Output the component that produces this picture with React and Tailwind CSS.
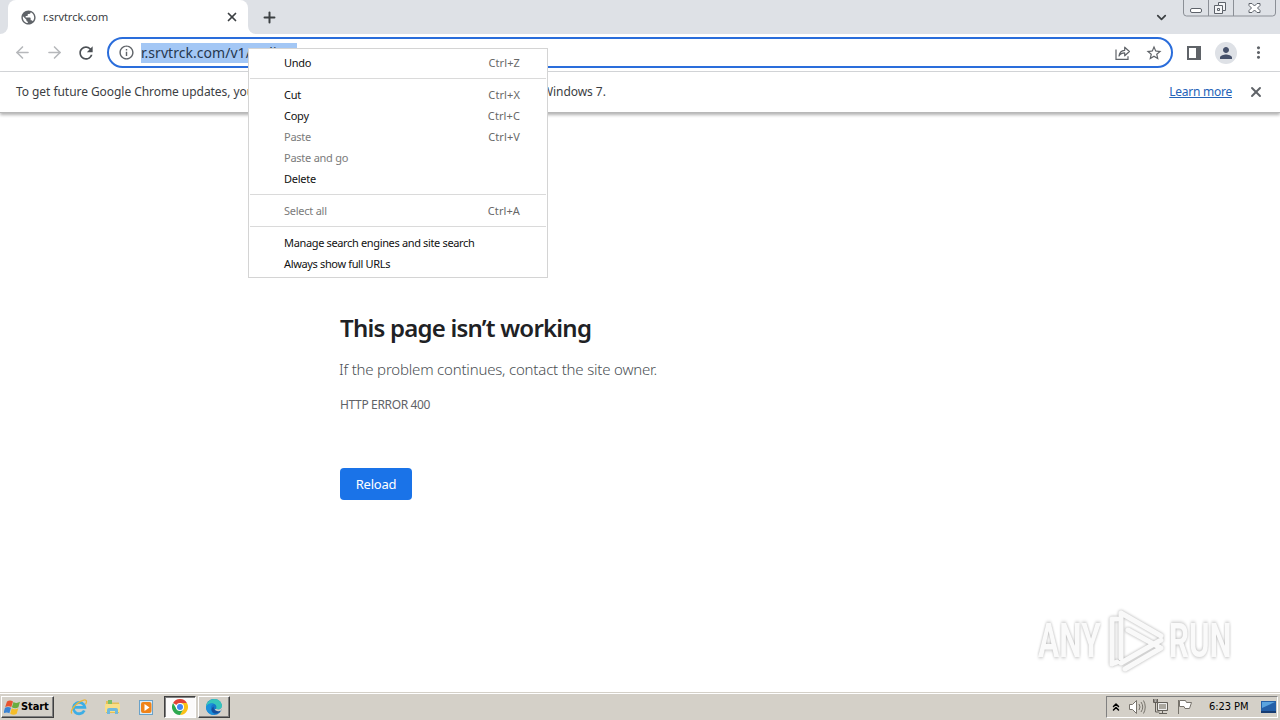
import { X, Plus, ChevronDown, ArrowLeft, ArrowRight, ChevronsUp } from 'lucide-react';
import { MdRefresh, MdInfoOutline, MdStarBorder, MdMoreVert, MdPerson, MdPublic } from 'react-icons/md';

const MENU = [
  [{ label: 'Undo', keys: 'Ctrl+Z' }],
  [
    { label: 'Cut', keys: 'Ctrl+X' },
    { label: 'Copy', keys: 'Ctrl+C' },
    { label: 'Paste', keys: 'Ctrl+V', disabled: true },
    { label: 'Paste and go', disabled: true },
    { label: 'Delete' },
  ],
  [{ label: 'Select all', keys: 'Ctrl+A', disabled: true }],
  [{ label: 'Manage search engines and site search', wide: true }, { label: 'Always show full URLs', wide: true }],
];

function WindowButtons() {
  return (
    <svg className="ml-[14px] mr-[3px] h-[17px] w-[94px] shrink-0 self-start" viewBox="0 0 94 17" fill="none">
      <path d="M.5 0v13q0 3 3 3h86q3 0 3-3V0M25.5 0v16M50.5 0v16" stroke="#8b8f96" />
      <rect x="7.5" y="8.5" width="11" height="4" rx="1.5" fill="#fff" stroke="#5d626a" />
      <path d="M35.5 2.500h7v8h-3v3h-8v-8h4z" fill="#f4f5f7" stroke="#5d626a" />
      <path d="M35.5 5.500h4v5M34.5 8.500h2v2h-2z" stroke="#5d626a" />
      <path d="M66 3.500h3l2.500 2.500L74 3.500h3v2L74.500 8l2.500 2.500v2h-3L71.500 10 69 12.500h-3v-2L68.500 8 66 5.500z" fill="#fff" stroke="#5d626a" />
    </svg>
  );
}

function TabStrip() {
  return (
    <div className="flex h-[34px] shrink-0 items-center bg-[#dee1e6]">
      <div className="h-full w-2 bg-white">
        <div className="h-full w-full rounded-br-lg bg-[#dee1e6]" />
      </div>
      <div className="flex h-full w-[240px] items-center rounded-t-lg bg-white pr-2 pl-[12px]">
        <MdPublic size={17} className="text-[#5f6368]" />
        <span className="ml-[6px] flex-1 text-[11px] tracking-[-0.04px] text-[#3c4043]">r.srvtrck.com</span>
        <X size={14} strokeWidth={3} className="mr-[1px] text-[#3c4043]" />
      </div>
      <div className="h-full w-2 bg-white">
        <div className="h-full w-full rounded-bl-lg bg-[#dee1e6]" />
      </div>
      <Plus size={17} strokeWidth={2.8} className="ml-[5px] text-[#3c4043]" />
      <div className="flex-1" />
      <ChevronDown size={15} strokeWidth={2.8} className="text-[#3c4043]" />
      <WindowButtons />
    </div>
  );
}

function Toolbar() {
  return (
    <div className="flex h-[38px] shrink-0 items-center border-b border-[#d5d7da] bg-white pl-[13px]">
      <ArrowLeft size={19} strokeWidth={2} className="text-[#b6b8bb]" />
      <ArrowRight size={19} strokeWidth={2} className="ml-[13px] text-[#b6b8bb]" />
      <MdRefresh size={20} className="ml-[12px] text-[#4c5055]" />
      <div className="ml-[11px] flex h-[31px] w-[1066px] items-center rounded-full border-2 border-[#2a6ddb] pr-[8px] pl-[9px]">
        <MdInfoOutline size={17} className="text-[#5f6368]" />
        <span className="ml-[6px] h-[20px] w-[156px] overflow-hidden bg-[#a3c7f5] text-[14px] leading-[20px] tracking-[0.04px] whitespace-nowrap text-[#26374f]">
          r.srvtrck.com/v1/redirect
        </span>
        <div className="flex-1" />
        <svg className="h-[16px] w-[16px]" viewBox="0 0 16 16" fill="none" stroke="#5f6368" strokeWidth="1.2">
          <path d="M1 4.500v9.800h12v-3" />
          <path d="M4 11c.4-3.800 2.200-5.500 5.700-5.700V2.200l4.700 4.300-4.700 4.300V7.900C7 7.900 5.300 8.700 4 11z" strokeLinejoin="round" />
        </svg>
        <MdStarBorder size={18} className="ml-[14px] text-[#5f6368]" />
      </div>
      <svg className="ml-[14px] h-[14px] w-[14px]" viewBox="0 0 14 14">
        <path d="M0 0h14v14H0zM2 2v10h7V2z" fill="#5f6368" fillRule="evenodd" />
      </svg>
      <div className="ml-[14px] flex h-[22px] w-[22px] items-center justify-center rounded-full bg-[#dee1e6]">
        <MdPerson size={18} className="text-[#46516b]" />
      </div>
      <MdMoreVert size={19} className="ml-[12px] text-[#5f6368]" />
    </div>
  );
}

function InfoBar() {
  return (
    <div className="relative flex h-[41px] shrink-0 items-center border-b border-[#b8b8b8] bg-white pr-[16px] pl-4 text-[12px] shadow-[0_2px_3px_rgba(0,0,0,0.3)]">
      <span className="flex-1 tracking-[-0.055px] whitespace-nowrap text-[#3c4043]">
        To get future Google Chrome updates, you'll need Windows 10 or later. This computer is using Windows 7.
      </span>
      <a className="tracking-[-0.25px] text-[#2463b8] underline">Learn more</a>
      <X size={16} strokeWidth={2.8} className="ml-[16px] text-[#5f6368]" />
    </div>
  );
}

function ContextMenu() {
  return (
    <div className="absolute top-[48px] left-[248px] flex h-[230px] w-[300px] flex-col border border-[#d4d4d4] bg-white px-[1px] pt-[4px] text-[11px]">
      {MENU.map((group, i) => (
        <div key={i} className={i > 0 ? 'mt-[4px] border-t border-[#dadada] pt-[6px]' : ''}>
          {group.map(({ label, keys, disabled, wide }) => (
            <div
              key={label}
              className={`flex h-[21px] items-center justify-between pr-[26px] pl-[34px] whitespace-nowrap ${
                disabled ? 'text-[#7b7b7b]' : 'text-[#111]'
              } ${wide ? 'tracking-[-0.35px]' : 'tracking-[-0.25px]'}`}
            >
              <span>{label}</span>
              <span className="tracking-[0.1px] text-[#686868]">{keys}</span>
            </div>
          ))}
        </div>
      ))}
    </div>
  );
}

function ErrorPage() {
  return (
    <main className="flex flex-1 flex-col items-start bg-white pt-[198px] pl-[340px]">
      <h1 className="text-[24px] leading-[34px] font-semibold tracking-[-0.78px] text-[#202124]">This page isn’t working</h1>
      <p className="-ml-px mt-[14px] text-[15px] leading-[20px] font-light tracking-[-0.19px] text-[#4b4f54]">
        If the problem continues, contact the site owner.
      </p>
      <p className="mt-[18px] text-[12px] leading-[16px] tracking-[-0.35px] text-[#5f6368]">HTTP ERROR 400</p>
      <button className="mt-[55px] h-[32px] w-[72px] rounded-[4px] bg-[#1a73e8] pt-[1px] text-[13px] tracking-[-0.25px] text-white">Reload</button>
    </main>
  );
}

function Watermark() {
  return (
    <div className="absolute top-[609px] left-[1038px] flex items-center font-['Roboto','Liberation_Sans',sans-serif] text-[48px] leading-[64px] font-bold text-[#fafafa]">
      <span className="w-[68px]">
        <span className="inline-block origin-left scale-x-[0.66] drop-shadow-[0_0_2px_#aaa]">ANY</span>
      </span>
      <svg className="h-[64px] w-[60px] drop-shadow-[0_0_1.5px_#aaa]" viewBox="0 0 60 64" fill="none" stroke="#f9f9f9" strokeWidth="5" strokeLinejoin="round" strokeLinecap="round">
        <path d="M11 10H6v45l5-2M15 4v45M15 4l40 23M22 21l31 17M55 31L15 54M19 60l36-21" />
      </svg>
      <span className="ml-[3px] inline-block w-[65px]">
        <span className="inline-block origin-left scale-x-[0.65] drop-shadow-[0_0_2px_#aaa]">RUN</span>
      </span>
    </div>
  );
}

function WindowsFlag() {
  return (
    <svg className="h-[17px] w-[17px]" viewBox="0 0 17 17">
      <path d="M3 2.500q3-2 6 0L7.300 8Q4.500 6.500 1.200 8z" fill="#e8532f" />
      <path d="M9.500 3q3 2 6.500-.2l-1.600 5.500q-3 2-6.500 0z" fill="#69ad3f" />
      <path d="M1 8.700q3-1.600 6 0l-1.600 5.500q-2.500-1.500-6 0z" fill="#3b83d3" />
      <path d="M7.800 9.200q3 2 6.500 0l-1.600 5.500q-3 2-6.500 0z" fill="#f6bd28" />
    </svg>
  );
}

function IeIcon() {
  return (
    <svg className="h-[18px] w-[18px]" viewBox="0 0 18 18" fill="none">
      <path d="M14.300 12.500A5.700 5.700 0 1 1 14.800 9.300H5" stroke="#3daee5" strokeWidth="2.800" />
      <path d="M2 15.500c-3-2 4-11 11-13.200 4.500-1.400 3.800 2 2.500 4" stroke="#e9b63d" strokeWidth="1.300" />
    </svg>
  );
}

function FolderIcon() {
  return (
    <svg className="h-[18px] w-[18px]" viewBox="0 0 18 18">
      <path d="M2 3h5l1 1.500h7V15H2z" fill="#e5bf55" />
      <path d="M4 2h4v4H4z" fill="#7abf67" />
      <path d="M1 6h15v8H1z" fill="#f8df88" />
      <path d="M3 16v-4q0-2 2-2h7q2 0 2 2v4h-3v-3H6v3z" fill="#70b9dc" />
    </svg>
  );
}

function MediaIcon() {
  return (
    <svg className="h-[17px] w-[17px]" viewBox="0 0 17 17">
      <rect x="1.5" y="1.5" width="13" height="14" fill="#d8ebf8" stroke="#6aa2c9" />
      <rect x="3" y="3" width="10.500" height="11" rx="2" fill="#ef8319" />
      <path d="M6.500 5v7l5-3.500z" fill="#fff" />
    </svg>
  );
}

function ChromeIcon() {
  return (
    <svg className="h-[16px] w-[16px]" viewBox="0 0 16 16">
      <path d="M8 8L1.070 4A8 8 0 0 1 14.930 4H8z" fill="#e24336" />
      <path d="M8 4h6.930A8 8 0 0 1 8 16l3.460-6z" fill="#fbc116" />
      <path d="M1.070 4A8 8 0 0 0 8 16l3.460-6L8 8 4.540 10z" fill="#2da94f" />
      <circle cx="8" cy="8" r="4" fill="#fff" />
      <circle cx="8" cy="8" r="3" fill="#4285f4" />
    </svg>
  );
}

function EdgeIcon() {
  return (
    <svg className="h-[16px] w-[16px]" viewBox="0 0 16 16">
      <circle cx="8" cy="8" r="8" fill="#1678ca" />
      <path d="M0 8C.5 3 4 0 8.500 0 13 0 16 3.500 16 7c0 3-3 4-6 3 .5-1 .5-1.800.3-2.700C9.500 4 4 3.200 0 8z" fill="#36c6bb" />
      <path d="M0 8C2 4 6 3.800 8 5c-4 1-4.500 7.500 1 10.800C4 16.500 0 13 0 8z" fill="#1b91dc" />
      <path d="M8 7.500C7 9 8 13 14.500 12c-3 4-9 3-9-1.500Q5.500 8.500 8 7.500z" fill="#164f9c" />
      <path d="M10 10c3 1 6 0 6-3v3q-1 2.500-4 2.300Q9 12 8.800 10z" fill="#d4d0c8" />
    </svg>
  );
}

function Taskbar() {
  return (
    <div className="flex h-[28px] shrink-0 items-center border-t border-[#d4d0c8] bg-[#d4d0c8] pt-[1px] shadow-[inset_0_1px_0_#fff]">
      <button className="ml-[1px] flex h-[22px] w-[53px] items-center border border-t-white border-r-[#404040] border-b-[#404040] border-l-white pl-[2px] shadow-[inset_-1px_-1px_0_#808080]">
        <WindowsFlag />
        <span className="font-['DejaVu_Sans_Condensed','DejaVu_Sans',sans-serif] text-[11px] font-bold tracking-[-0.1px] text-black">Start</span>
      </button>
      <div className="ml-[16px] flex items-center gap-[16px]">
        <IeIcon />
        <FolderIcon />
        <MediaIcon />
      </div>
      <div className="ml-[9px] flex h-[22px] w-[32px] items-center justify-center border border-t-[#404040] border-r-white border-b-white border-l-[#404040] bg-[#fbfafa] shadow-[inset_1px_1px_0_#808080]">
        <ChromeIcon />
      </div>
      <div className="ml-[2px] flex h-[22px] w-[32px] items-center justify-center border border-t-white border-r-[#404040] border-b-[#404040] border-l-white shadow-[inset_-1px_-1px_0_#808080]">
        <EdgeIcon />
      </div>
      <div className="flex-1" />
      <div className="mr-[2px] flex h-[22px] w-[172px] items-center border border-t-[#808080] border-r-white border-b-white border-l-[#808080] pl-[3px]">
        <ChevronsUp size={12} strokeWidth={3} className="text-black" />
        <svg className="ml-[6px] h-[18px] w-[18px]" viewBox="0 0 18 18" fill="#fff" stroke="#77736c">
          <path d="M1.500 6.500h3l4-4v13l-4-4h-3z" />
          <path d="M11 6q2 3 0 6M13 4q3.500 5 0 10M15.500 2.500q3.500 6.500 0 13" fill="none" />
        </svg>
        <svg className="ml-[6px] h-[18px] w-[18px]" viewBox="0 0 18 18" fill="none" stroke="#625f59">
          <path d="M5.500 4.500h10v8h-10z" fill="#aaa79f" />
          <path d="M6.500 5.500h8v6h-8z" stroke="#eee" />
          <path d="M7 15.500h8M10.500 12v3M1.500 1v3.500h4V1M3.500 5v9h4" />
          <path d="M2 2h3v2H2z" fill="#fff" />
        </svg>
        <svg className="ml-[6px] h-[18px] w-[18px]" viewBox="0 0 18 18" fill="#fff" stroke="#77736c">
          <path d="M2.500 2v14M3.500 2.500h6l1 2h5l-2 6H9l-1-2H3.500z" />
        </svg>
        <span className="ml-[15px] w-[43px] font-['DejaVu_Sans_Condensed','DejaVu_Sans',sans-serif] text-[11px] tracking-[-0.05px] whitespace-nowrap text-black">6:23 PM</span>
        <svg className="ml-[8px] h-[15px] w-[16px]" viewBox="0 0 16 15">
          <path d="M1 1h15v10H1z" fill="#245fa8" />
          <path d="M2 2h13L2 8z" fill="#5aa3df" />
          <path d="M1 11h15v2H1z" fill="#173c72" />
        </svg>
      </div>
    </div>
  );
}

export default function App() {
  return (
    <div className="relative flex h-[720px] w-[1280px] flex-col overflow-hidden bg-white font-['Noto_Sans','Open_Sans',sans-serif]">
      <TabStrip />
      <Toolbar />
      <InfoBar />
      <ErrorPage />
      <Taskbar />
      <ContextMenu />
      <Watermark />
    </div>
  );
}
